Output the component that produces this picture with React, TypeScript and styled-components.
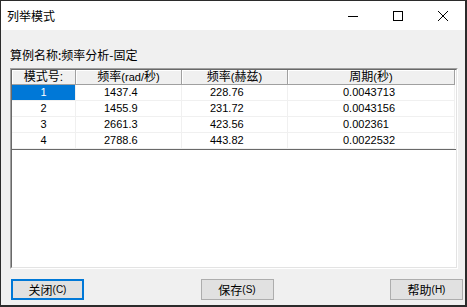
import { FC } from "react"
import styled, { createGlobalStyle } from "styled-components"

const GlobalStyle = createGlobalStyle`
  html, body {
    margin: 0;
    padding: 0;
    background: #ffffff;
  }
  body {
    font-family: "Liberation Sans", "Noto Sans CJK SC", sans-serif;
    color: #000;
  }
`

const Window = styled.div`
  width: 467px;
  height: 307px;
  box-sizing: border-box;
  border: 1px solid #2b2b2b;
  border-right-width: 2px;
  border-bottom-width: 2px;
  display: flex;
  flex-direction: column;
  background: #f0f0f0;
`

const TitleBar = styled.div`
  height: 29px;
  flex: none;
  background: #ffffff;
  display: flex;
  align-items: center;
`

const Title = styled.div`
  flex: 1;
  padding-left: 6px;
  font-size: 12px;
  line-height: 14px;
  font-family: "Noto Sans CJK SC", sans-serif;
`

const CaptionButton = styled.div`
  width: 45px;
  height: 29px;
  display: flex;
  align-items: center;
  justify-content: center;
`

const Body = styled.div`
  flex: 1;
  display: flex;
  flex-direction: column;
  padding: 18px 0 5px 0;
`

const CaseLabel = styled.div`
  font-size: 12px;
  line-height: 14px;
  padding-left: 9px;
  margin-bottom: 6px;
  font-family: "Noto Sans CJK SC", sans-serif;
`

const ListBox = styled.div`
  margin: 0 7px 0 9px;
  height: 201px;
  box-sizing: border-box;
  border-style: solid;
  border-width: 1px;
  border-color: #a0a0a0 #ffffff #ffffff #a0a0a0;
  display: flex;
`

const ListInner = styled.div`
  flex: 1;
  border-style: solid;
  border-width: 1px;
  border-color: #696969 #e3e3e3 #e3e3e3 #696969;
  background: #ffffff;
`

const Grid = styled.div`
  display: grid;
  grid-template-columns: 64px 106px 106px 167px;
  border-bottom: 1px solid #696969;
`

const HeaderCell = styled.div`
  height: 14px;
  background: #f0f0f0;
  border-right: 1px solid #a0a0a0;
  border-bottom: 1px solid #a0a0a0;
  box-shadow: inset 1px 1px 0 #ffffff;
  font-size: 12px;
  line-height: 14px;
  text-align: center;
  white-space: nowrap;
  overflow: hidden;
`

const Small = styled.span`
  font-size: 11px;
  font-family: "Liberation Sans", sans-serif;
`

const Cell = styled.div<{ $selected?: boolean; $pad?: number }>`
  height: 15px;
  border-right: 1px solid #f0f0f0;
  border-bottom: 1px solid #f0f0f0;
  font-size: 11px;
  line-height: 15px;
  white-space: nowrap;
  text-align: ${(p) => (p.$pad === undefined ? "center" : "left")};
  padding-left: ${(p) => (p.$pad === undefined ? 0 : p.$pad)}px;
  background: ${(p) => (p.$selected ? "#0078d7" : "#ffffff")};
  color: ${(p) => (p.$selected ? "#ffffff" : "#000000")};
`

const ButtonRow = styled.div`
  margin-top: 10px;
  display: flex;
  justify-content: space-between;
  padding: 0 2px 0 10px;
`

const Button = styled.div<{ $focused?: boolean }>`
  width: 73px;
  height: 21px;
  box-sizing: border-box;
  background: #e1e1e1;
  border: ${(p) => (p.$focused ? "2px solid #0078d7" : "1px solid #adadad")};
  display: flex;
  align-items: center;
  justify-content: center;
  font-size: 12px;
  font-family: "Noto Sans CJK SC", sans-serif;
`

const Key = styled.span`
  font-size: 10px;
  font-family: "Liberation Sans", sans-serif;
`

const rows = [
  ["1", "1437.4", "228.76", "0.0043713"],
  ["2", "1455.9", "231.72", "0.0043156"],
  ["3", "2661.3", "423.56", "0.002361"],
  ["4", "2788.6", "443.82", "0.0022532"],
]

const pads = [undefined, 28, 28, 55]

const App: FC = () => {
  return (
    <>
      <GlobalStyle />
      <Window>
        <TitleBar>
          <Title>列举模式</Title>
          <CaptionButton>
            <svg width="10" height="10" viewBox="0 0 10 10">
              <line x1="0" y1="5.5" x2="10" y2="5.5" stroke="#000" strokeWidth="1" />
            </svg>
          </CaptionButton>
          <CaptionButton>
            <svg width="10" height="10" viewBox="0 0 10 10">
              <rect x="0.5" y="0.5" width="9" height="9" fill="none" stroke="#000" strokeWidth="1" />
            </svg>
          </CaptionButton>
          <CaptionButton>
            <svg width="10" height="10" viewBox="0 0 10 10">
              <path d="M0 0 L10 10 M10 0 L0 10" stroke="#000" strokeWidth="1" />
            </svg>
          </CaptionButton>
        </TitleBar>
        <Body>
          <CaseLabel>算例名称:频率分析-固定</CaseLabel>
          <ListBox>
            <ListInner>
              <Grid>
                <HeaderCell>模式号:</HeaderCell>
                <HeaderCell>频率<Small>(rad/</Small>秒<Small>)</Small></HeaderCell>
                <HeaderCell>频率<Small>(</Small>赫兹<Small>)</Small></HeaderCell>
                <HeaderCell>周期<Small>(</Small>秒<Small>)</Small></HeaderCell>
                {rows.map((r, i) =>
                  r.map((v, j) => (
                    <Cell key={`${i}-${j}`} $pad={pads[j]} $selected={i === 0 && j === 0}>
                      {v}
                    </Cell>
                  ))
                )}
              </Grid>
            </ListInner>
          </ListBox>
          <ButtonRow>
            <Button $focused>关闭<Key>(C)</Key></Button>
            <Button>保存<Key>(S)</Key></Button>
            <Button>帮助<Key>(H)</Key></Button>
          </ButtonRow>
        </Body>
      </Window>
    </>
  )
}

export default App
